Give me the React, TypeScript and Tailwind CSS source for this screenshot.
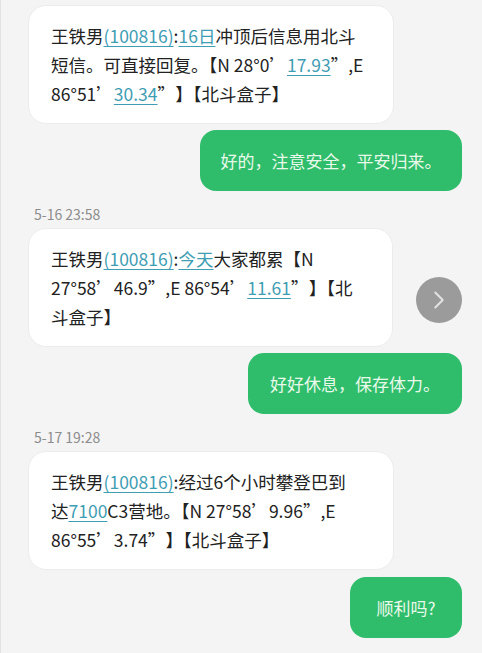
import { ChevronRight } from "lucide-react";

const font = { fontFamily: '"Noto Sans CJK SC", "Noto Sans", sans-serif' };

function L({ children }: { children: React.ReactNode }) {
  return (
    <span className="text-[#3f9db4] underline decoration-1 underline-offset-[3px]">
      {children}
    </span>
  );
}

// closing quote followed by a gap before 】
function Q() {
  return <span className="mr-[9px]">”</span>;
}

function Incoming({ lines }: { lines: React.ReactNode[] }) {
  return (
    <div className="w-[366px] rounded-[18px] border border-[#ececec] bg-white px-[22px] py-[15px] text-[17.5px] leading-[29px] text-[#222]">
      {lines.map((line, i) => (
        <div key={i} className="whitespace-nowrap">
          {line}
        </div>
      ))}
    </div>
  );
}

function Outgoing({ text, width }: { text: string; width: string }) {
  return (
    <div className="flex justify-end">
      <div
        className={`${width} rounded-[16px] bg-[#2fbd6b] py-[15px] text-center text-[17px] leading-[31px] text-[#e9f9ea]`}
      >
        {text}
      </div>
    </div>
  );
}

function Stamp({ text }: { text: string }) {
  return (
    <div className="mt-[15px] mb-[5px] pl-[6px] text-[14px] leading-[17px] text-[#8c8c8c]">
      {text}
    </div>
  );
}

export default function App() {
  return (
    <div
      lang="zh-CN"
      className="h-[653px] w-[482px] overflow-hidden border-l border-[#e2e2e2] bg-[#f4f4f4] pt-[5px] pr-[20px] pl-[27px]"
      style={font}
    >
      <Incoming
        lines={[
          <>
            王铁男<L>(100816)</L>:<L>16日</L>冲顶后信息用北斗
          </>,
          <>
            短信。可直接回复。【N 28°0’<L>17.93</L>”,E
          </>,
          <>
            86°51’<L>30.34</L>
            <Q />】【北斗盒子】
          </>,
        ]}
      />
      <div className="mt-[6px]">
        <Outgoing text="好的，注意安全，平安归来。" width="w-[262px]" />
      </div>

      <Stamp text="5-16 23:58" />
      <div className="flex items-start">
        <Incoming
          lines={[
            <>
              王铁男<L>(100816)</L>:<L>今天</L>大家都累【N
            </>,
            <>
              27°58’46.9”,E 86°54’<L>11.61</L>
              <Q />】【北
            </>,
            <>斗盒子】</>,
          ]}
        />
        <div className="mt-[49px] ml-[23px] flex h-[46px] w-[46px] items-center justify-center rounded-full bg-[#9b9b9b]">
          <ChevronRight size={30} strokeWidth={1.5} className="text-[#e4e4e4]" />
        </div>
      </div>
      <div className="mt-[6px]">
        <Outgoing text="好好休息，保存体力。" width="w-[214px]" />
      </div>

      <Stamp text="5-17 19:28" />
      <Incoming
        lines={[
          <>
            王铁男<L>(100816)</L>:经过6个小时攀登巴到
          </>,
          <>
            达<L>7100</L>C3营地。【N 27°58’9.96”,E
          </>,
          <>
            86°55’3.74
            <Q />】【北斗盒子】
          </>,
        ]}
      />
      <div className="mt-[7px]">
        <Outgoing text="顺利吗?" width="w-[112px]" />
      </div>
    </div>
  );
}
